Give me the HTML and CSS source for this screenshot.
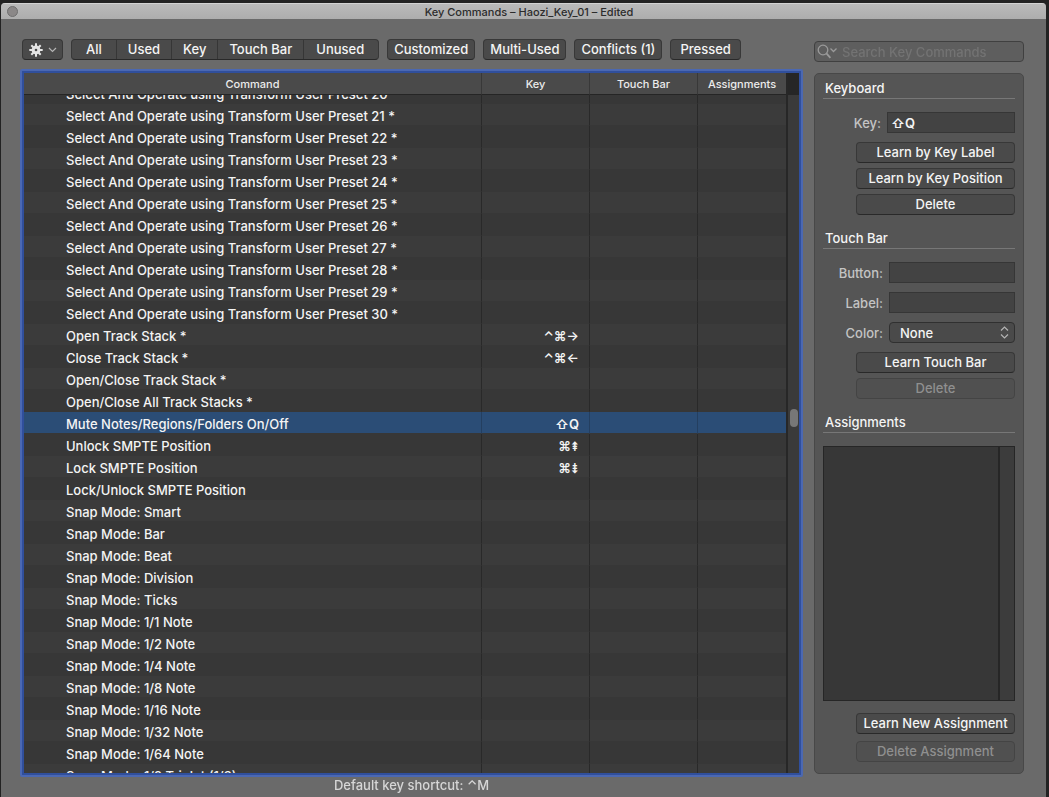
FILE: index.html
```html
<!DOCTYPE html>
<html lang="en">

<head>
	<meta charset="UTF-8" />
	<title>Key Commands – Haozi_Key_01 – Edited</title>
	<link rel="stylesheet" href="styles.css">
</head>

<body>
	<div class="window">
		<header class="title-bar">
			<button class="close-btn" aria-label="Close"></button>
			<h1>Key Commands – Haozi_Key_01 – Edited</h1>
		</header>

		<main class="content">
			<section class="left-panel">
				<div class="toolbar">
					<button class="btn gear-btn" aria-label="Options">
						<svg width="14" height="14" viewBox="0 0 14 14">
							<g stroke="#e6e6e6" stroke-width="2">
								<path d="M7 0.3v13.4M0.3 7h13.4M2.3 2.3l9.4 9.4M11.7 2.3l-9.4 9.4" />
							</g>
							<circle cx="7" cy="7" r="4.4" fill="#e6e6e6" />
							<circle cx="7" cy="7" r="1.3" fill="#4a4a4a" />
						</svg>
						<svg width="9" height="6" viewBox="0 0 9 6">
							<path d="M1 1l3.5 3.5L8 1" fill="none" stroke="#b4b4b4" stroke-width="1.2" />
						</svg>
					</button>
					<div class="segments">
						<button>All</button>
						<button>Used</button>
						<button>Key</button>
						<button>Touch Bar</button>
						<button>Unused</button>
					</div>
					<button class="btn">Customized</button>
					<button class="btn">Multi-Used</button>
					<button class="btn">Conflicts (1)</button>
					<button class="btn pressed-btn">Pressed</button>
				</div>

				<div class="table-frame">
					<div class="table-scroll" id="tableScroll">
						<table>
							<colgroup>
								<col>
								<col class="col-key">
								<col class="col-touch">
								<col class="col-assign">
							</colgroup>
							<thead>
								<tr>
									<th>Command</th>
									<th>Key</th>
									<th>Touch Bar</th>
									<th>Assignments</th>
								</tr>
							</thead>
							<tbody id="commandList"></tbody>
						</table>
					</div>
					<div class="scroll-track">
						<div class="scroll-thumb"></div>
					</div>
				</div>

				<footer class="hint">Default key shortcut: ⌃M</footer>
			</section>

			<aside class="right-panel">
				<div class="search">
					<svg width="21" height="15" viewBox="0 0 21 15" fill="none" stroke="#9a9a9a" stroke-width="1.3">
						<circle cx="6" cy="6" r="4.8" />
						<path d="M9.4 9.4l4 4.4" stroke-width="1.8" />
						<path d="M13.5 4.5l3 3 3-3" />
					</svg>
					<input type="search" placeholder="Search Key Commands" aria-label="Search Key Commands">
				</div>

				<div class="inspector">
					<h2>Keyboard</h2>
					<div class="field">
						<label for="keyInput">Key:</label>
						<input type="text" id="keyInput" class="key-input" value="⇧Q">
					</div>
					<div class="buttons">
						<button class="btn">Learn by Key Label</button>
						<button class="btn">Learn by Key Position</button>
						<button class="btn">Delete</button>
					</div>

					<h2>Touch Bar</h2>
					<div class="field">
						<label for="buttonInput">Button:</label>
						<input type="text" id="buttonInput">
					</div>
					<div class="field">
						<label for="labelInput">Label:</label>
						<input type="text" id="labelInput">
					</div>
					<div class="field">
						<label for="colorSelect">Color:</label>
						<div class="select-wrap">
							<select id="colorSelect">
								<option>None</option>
							</select>
							<svg width="9" height="13" viewBox="0 0 9 13" fill="none" stroke="#b4b4b4" stroke-width="1.2">
								<path d="M1 4.5L4.5 1 8 4.5M1 8.5L4.5 12 8 8.5" />
							</svg>
						</div>
					</div>
					<div class="buttons">
						<button class="btn">Learn Touch Bar</button>
						<button class="btn" disabled>Delete</button>
					</div>

					<h2>Assignments</h2>
					<div class="assign-list">
						<div class="assign-track"></div>
					</div>
					<div class="buttons assign-buttons">
						<button class="btn">Learn New Assignment</button>
						<button class="btn" disabled>Delete Assignment</button>
					</div>
				</div>
			</aside>
		</main>
	</div>

	<script src="script.js"></script>
</body>

</html>
```
FILE: styles.css
```css
* {
	box-sizing: border-box;
}

body {
	margin: 0;
	height: 100vh;
	padding: 3px 3px 0 1px;
	background-color: #222;
	font-family: Inter, "DejaVu Sans", sans-serif;
	font-size: 13px;
	font-weight: 500;
	color: #f4f4f4;
	overflow: hidden;
}

button,
input,
select {
	font: inherit;
	color: inherit;
	margin: 0;
}

.window {
	height: 100%;
	display: flex;
	flex-direction: column;
	background-color: #6a6a6a;
	border-radius: 4px 4px 0 0;
	overflow: hidden;
}

.title-bar {
	flex: none;
	height: 16px;
	display: flex;
	align-items: center;
	padding: 0 6px;
	background: linear-gradient(#bababa, #adadad);
	border-top: 1px solid #d2d2d2;
}

.close-btn {
	width: 11px;
	height: 11px;
	padding: 0;
	border: 1px solid #6f6f6f;
	border-radius: 50%;
	background-color: #8b8888;
}

.title-bar h1 {
	flex: 1;
	margin: 0;
	font-size: 11px;
	line-height: 14px;
	font-weight: 500;
	text-align: center;
	color: #2c2c2c;
}

.content {
	flex: 1;
	min-height: 0;
	display: flex;
	gap: 11px;
	padding: 20px 22px 0 19px;
}

.left-panel {
	flex: 1;
	min-width: 0;
	display: flex;
	flex-direction: column;
}

.toolbar {
	display: flex;
	gap: 8px;
	padding-left: 2px;
	margin-bottom: 9px;
}

.btn,
.segments {
	height: 21px;
	background-color: #4a4a4a;
	border: 1px solid #383838;
	border-bottom-color: #292929;
	border-radius: 4px;
}

.btn {
	padding: 0 6px;
	line-height: 19px;
	white-space: nowrap;
}

.btn:disabled {
	color: #8f8f8f;
	background-color: #505050;
	border-color: #444;
}

.gear-btn {
	display: flex;
	align-items: center;
	gap: 5px;
	width: 41px;
	padding: 0 5px 0 6px;
}

.pressed-btn {
	padding: 0 9px;
}

.segments {
	display: flex;
}

.segments button {
	padding: 0 11px;
	line-height: 19px;
	border: none;
	border-right: 1px solid #363636;
	background: none;
}

.segments button:first-child {
	padding: 0 14px;
}

.segments button:last-child {
	border-right: none;
	padding: 0 14px 0 12px;
}

.table-frame {
	flex: 1;
	min-height: 0;
	display: flex;
	border: 2px solid #4b68b2;
	border-radius: 2px;
	outline: 2px solid #304f9c;
	outline-offset: -4px;
	padding: 2px 1px 2px 2px;
}

.table-scroll {
	flex: 1;
	min-width: 0;
	overflow-y: scroll;
	scrollbar-width: none;
	background-color: #373737;
}

table {
	width: 100%;
	table-layout: fixed;
	border-spacing: 0;
}

.col-key,
.col-touch {
	width: 108px;
}

.col-assign {
	width: 88px;
}

th {
	position: sticky;
	top: 0;
	height: 22px;
	padding: 0;
	background-color: #4a4a4a;
	border-right: 1px solid #383838;
	border-bottom: 1px solid #252525;
	font-size: 11px;
	line-height: 20px;
	font-weight: 500;
	color: #ececec;
}

td {
	height: 22px;
	padding: 4px 0 0;
	border-right: 1px solid #292929;
	border-bottom: 1px solid #373737;
	line-height: 17px;
	white-space: nowrap;
}

th:last-child,
td:last-child {
	border-right: none;
}

td:first-child {
	padding-left: 42px;
}

td:nth-child(2) {
	padding-right: 10px;
	text-align: right;
	font-weight: 600;
}

tbody tr:nth-child(even) {
	background-color: #3b3b3b;
}

tbody tr.selected td {
	background-color: #2b4d76;
	border-right-color: #243f60;
}

.scroll-track {
	flex: none;
	width: 14px;
	padding: 336px 1px 0 2px;
	background: linear-gradient(#262626 22px, #3a3a3a 22px);
	border-left: 2px solid #272727;
}

.scroll-thumb {
	width: 8px;
	height: 18px;
	border-radius: 4px;
	background-color: #777;
}

.hint {
	flex: none;
	height: 20px;
	line-height: 17px;
	text-align: center;
	color: #d6d6d6;
}

.right-panel {
	flex: none;
	width: 210px;
	display: flex;
	flex-direction: column;
	padding: 2px 0 23px;
}

.search {
	flex: none;
	height: 21px;
	display: flex;
	align-items: center;
	gap: 4px;
	padding-left: 2px;
	margin-bottom: 11px;
	background-color: #5e5e5e;
	border: 1px solid #404040;
	border-radius: 4px;
}

.search input {
	flex: 1;
	min-width: 0;
	height: 17px;
	padding: 0;
	border: none;
	background: none;
	outline: none;
}

.search input::placeholder {
	color: #737373;
}

.inspector {
	flex: 1;
	min-height: 0;
	display: flex;
	flex-direction: column;
	padding: 5px 8px 11px;
	background-color: #555;
	border: 1px solid #484848;
	border-radius: 5px;
}

.inspector h2 {
	flex: none;
	margin: 0 0 13px;
	padding: 0 0 1px 2px;
	font-size: 13px;
	line-height: 18px;
	font-weight: 500;
	border-bottom: 1px solid #777;
}

.field {
	flex: none;
	display: flex;
	align-items: center;
	justify-content: flex-end;
	gap: 6px;
	margin-bottom: 9px;
}

.field label {
	color: #c4c4c4;
}

.field input,
.select-wrap {
	width: 126px;
	height: 21px;
}

.field input {
	padding: 0 3px;
	background-color: #434343;
	border: 1px solid #363636;
}

.field .key-input {
	width: 128px;
	font-weight: 600;
}

.select-wrap {
	position: relative;
}

.select-wrap select {
	appearance: none;
	width: 100%;
	height: 21px;
	padding: 0 10px;
	background-color: #4a4a4a;
	border: 1px solid #303030;
	border-radius: 4px;
}

.select-wrap svg {
	position: absolute;
	right: 6px;
	top: 4px;
	pointer-events: none;
}

.buttons {
	flex: none;
	display: flex;
	flex-direction: column;
	gap: 5px;
	width: 159px;
	margin: 0 0 14px auto;
}

.assign-list {
	flex: 1;
	display: flex;
	justify-content: flex-end;
	margin-bottom: 12px;
	background-color: #373737;
	border: 1px solid #262626;
}

.assign-track {
	width: 16px;
	border-left: 2px solid #262626;
	background-color: #3c3c3c;
}

.assign-buttons {
	gap: 7px;
	margin-bottom: 0;
}
```
FILE: script.js
```js
const commands = [];

for (let i = 20; i <= 30; i++) {
	commands.push([`Select And Operate using Transform User Preset ${i} *`]);
}

commands.push(
	["Open Track Stack *", "⌃⌘→"],
	["Close Track Stack *", "⌃⌘←"],
	["Open/Close Track Stack *"],
	["Open/Close All Track Stacks *"],
	["Mute Notes/Regions/Folders On/Off", "⇧Q"],
	["Unlock SMPTE Position", "⌘⇞"],
	["Lock SMPTE Position", "⌘⇟"],
	["Lock/Unlock SMPTE Position"]
);

["Smart", "Bar", "Beat", "Division", "Ticks", "1/1 Note", "1/2 Note", "1/4 Note", "1/8 Note",
	"1/16 Note", "1/32 Note", "1/64 Note", "1/2 Triplet (1/3)"].forEach(mode => {
	commands.push([`Snap Mode: ${mode}`]);
});

const selectedName = "Mute Notes/Regions/Folders On/Off";
const list = document.getElementById("commandList");

commands.forEach(([name, key]) => {
	const row = document.createElement("tr");
	if (name === selectedName) {
		row.className = "selected";
	}
	[name, key || "", "", ""].forEach(text => {
		const cell = document.createElement("td");
		cell.textContent = text;
		row.appendChild(cell);
	});
	list.appendChild(row);
});

// the list opens part-way into the first row
document.getElementById("tableScroll").scrollTop = 13;
```
